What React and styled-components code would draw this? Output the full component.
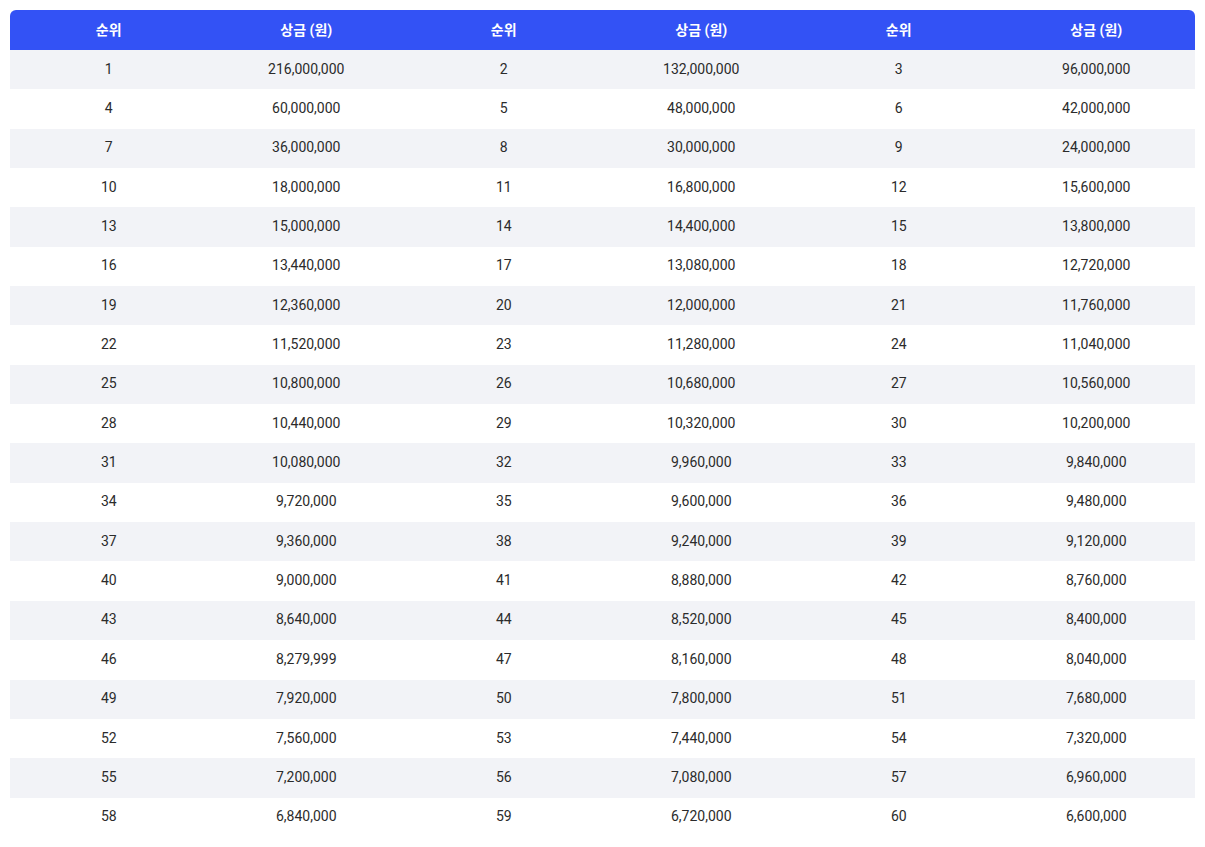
import React from "react";
import styled, { createGlobalStyle } from "styled-components";

const prizes = [
  216000000, 132000000, 96000000, 60000000, 48000000, 42000000,
  36000000, 30000000, 24000000, 18000000, 16800000, 15600000,
  15000000, 14400000, 13800000, 13440000, 13080000, 12720000,
  12360000, 12000000, 11760000, 11520000, 11280000, 11040000,
  10800000, 10680000, 10560000, 10440000, 10320000, 10200000,
  10080000, 9960000, 9840000, 9720000, 9600000, 9480000,
  9360000, 9240000, 9120000, 9000000, 8880000, 8760000,
  8640000, 8520000, 8400000, 8279999, 8160000, 8040000,
  7920000, 7800000, 7680000, 7560000, 7440000, 7320000,
  7200000, 7080000, 6960000, 6840000, 6720000, 6600000,
];

const fmt = (n) => n.toString().replace(/\B(?=(\d{3})+(?!\d))/g, ",");

export default function App() {
  const rows = [];
  for (let i = 0; i < prizes.length; i += 3) {
    rows.push(prizes.slice(i, i + 3).map((p, j) => ({ rank: i + j + 1, prize: p })));
  }

  return (
    <>
      <GlobalStyle />
      <Page>
        <Table>
          <thead>
            <tr>
              {[0, 1, 2].map((k) => (
                <React.Fragment key={k}>
                  <HeadCell $first={k === 0}>순위</HeadCell>
                  <HeadCell $last={k === 2}>상금 (원)</HeadCell>
                </React.Fragment>
              ))}
            </tr>
          </thead>
          <tbody>
            {rows.map((row, i) => (
              <Row key={i} $striped={i % 2 === 0}>
                {row.map((c) => (
                  <React.Fragment key={c.rank}>
                    <Cell>{c.rank}</Cell>
                    <Cell>{fmt(c.prize)}</Cell>
                  </React.Fragment>
                ))}
              </Row>
            ))}
          </tbody>
        </Table>
      </Page>
    </>
  );
}

const GlobalStyle = createGlobalStyle`
  body {
    margin: 0;
    background: #fff;
    font-family: Roboto, "Noto Sans CJK KR", sans-serif;
  }
`;

const Page = styled.div`
  padding: 10px;
`;

const Table = styled.table`
  width: 100%;
  border-collapse: separate;
  border-spacing: 0;
  table-layout: fixed;
`;

const HeadCell = styled.th`
  height: 40px;
  padding: 0 0 3px;
  box-sizing: border-box;
  background: #3352f5;
  color: #fff;
  font-size: 14px;
  font-weight: 700;
  text-align: center;
  border-top-left-radius: ${(p) => (p.$first ? "6px" : "0")};
  border-top-right-radius: ${(p) => (p.$last ? "6px" : "0")};
`;

const Row = styled.tr`
  background: ${(p) => (p.$striped ? "#f2f3f7" : "#fff")};
`;

const Cell = styled.td`
  height: 39.35px;
  padding: 0 0 2px;
  box-sizing: border-box;
  text-align: center;
  font-size: 14px;
  color: #2b2b2b;
`;
